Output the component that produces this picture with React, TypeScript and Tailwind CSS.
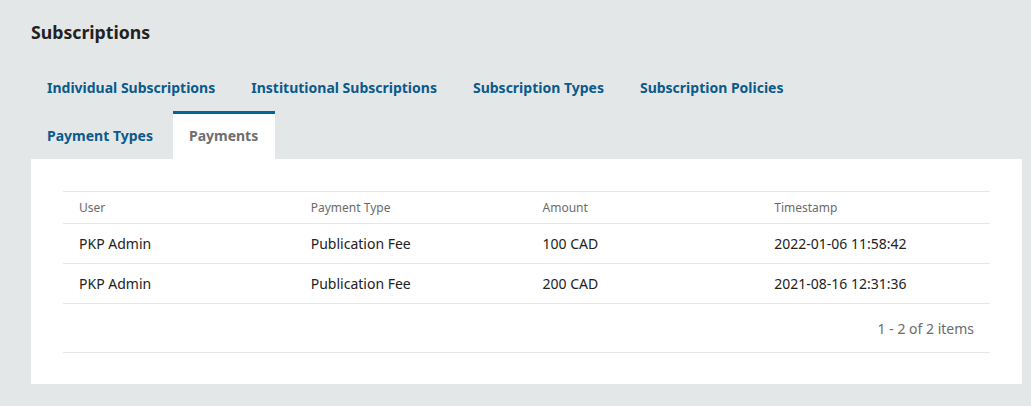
const tabsRow1 = ['Individual Subscriptions', 'Institutional Subscriptions', 'Subscription Types', 'Subscription Policies']

const payments = [
  { user: 'PKP Admin', type: 'Publication Fee', amount: '100 CAD', time: '2022-01-06 11:58:42' },
  { user: 'PKP Admin', type: 'Publication Fee', amount: '200 CAD', time: '2021-08-16 12:31:36' },
]

export default function App() {
  return (
    <div className="w-[1031px] h-[406px] bg-[#e4e7e8] font-['Noto_Sans',sans-serif] overflow-hidden">
      <div className="pl-[31px] pr-[9px] pt-[19px]">
        {/* Title */}
        <h1 className="text-[17.7px] leading-[26px] font-bold text-[#222]">Subscriptions</h1>

        {/* Tabs */}
        <div className="mt-[18px] flex flex-wrap gap-[4px]">
          {tabsRow1.map((t) => (
            <button key={t} className="h-12 px-4 pb-[2px] text-[14px] font-bold text-[#0a5a8c] border-t-[3px] border-transparent">
              {t}
            </button>
          ))}
        </div>
        <div className="flex gap-[4px]">
          <button className="h-12 px-4 pb-[2px] text-[14px] font-bold text-[#0a5a8c] border-t-[3px] border-transparent">
            Payment Types
          </button>
          <button className="h-12 pl-4 pr-[17px] pb-[2px] text-[14px] font-bold text-[#6e6e6e] bg-white border-t-[3px] border-[#006798]">
            Payments
          </button>
        </div>

        {/* Panel */}
        <div className="bg-white p-8 h-[225px]">
          <div className="border-t border-[#e6e6e6]">
            <div className="grid grid-cols-4 h-8 items-center border-b border-[#e6e6e6] text-[12px] text-[#6b6b6b]">
              <div className="px-4">User</div>
              <div className="px-4">Payment Type</div>
              <div className="px-4">Amount</div>
              <div className="px-4">Timestamp</div>
            </div>
            {payments.map((p) => (
              <div key={p.time} className="grid grid-cols-4 h-10 items-center border-b border-[#e6e6e6] text-[14px] text-[#222]">
                <div className="px-4">{p.user}</div>
                <div className="px-4">{p.type}</div>
                <div className="px-4">{p.amount}</div>
                <div className="px-4">{p.time}</div>
              </div>
            ))}
            <div className="h-[49px] flex items-center justify-end px-4 border-b border-[#e6e6e6] text-[14px] text-[#6b6b6b]">
              1 - 2 of 2 items
            </div>
          </div>
        </div>
      </div>
    </div>
  )
}
